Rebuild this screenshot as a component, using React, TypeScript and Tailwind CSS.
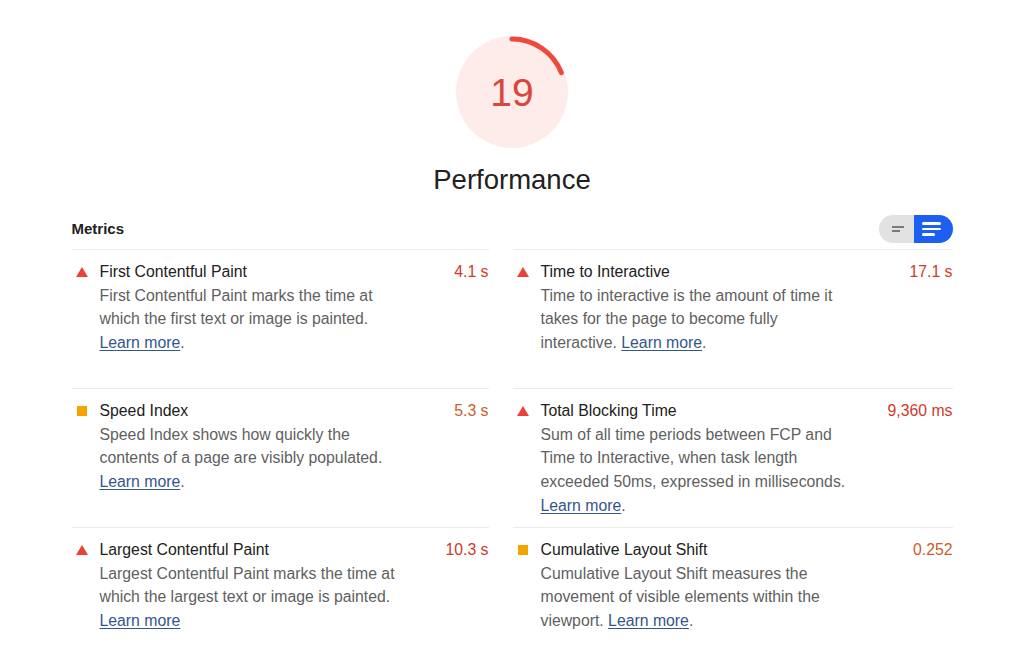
import React from 'react';

type Metric = {
  title: string;
  value: string;
  level: 'fail' | 'average';
  lines: string[];
  linkInline?: boolean;
  period?: boolean;
};

const METRICS: Metric[] = [
  {
    title: 'First Contentful Paint',
    value: '4.1 s',
    level: 'fail',
    lines: ['First Contentful Paint marks the time at', 'which the first text or image is painted.'],
    period: true,
  },
  {
    title: 'Time to Interactive',
    value: '17.1 s',
    level: 'fail',
    lines: ['Time to interactive is the amount of time it', 'takes for the page to become fully', 'interactive.'],
    linkInline: true,
    period: true,
  },
  {
    title: 'Speed Index',
    value: '5.3 s',
    level: 'average',
    lines: ['Speed Index shows how quickly the', 'contents of a page are visibly populated.'],
    period: true,
  },
  {
    title: 'Total Blocking Time',
    value: '9,360 ms',
    level: 'fail',
    lines: [
      'Sum of all time periods between FCP and',
      'Time to Interactive, when task length',
      'exceeded 50ms, expressed in milliseconds.',
    ],
    period: true,
  },
  {
    title: 'Largest Contentful Paint',
    value: '10.3 s',
    level: 'fail',
    lines: ['Largest Contentful Paint marks the time at', 'which the largest text or image is painted.'],
    period: false,
  },
  {
    title: 'Cumulative Layout Shift',
    value: '0.252',
    level: 'average',
    lines: ['Cumulative Layout Shift measures the', 'movement of visible elements within the', 'viewport.'],
    linkInline: true,
    period: true,
  },
];

function Gauge() {
  const r = 53;
  const c = 2 * Math.PI * r;
  const pct = 0.19;
  return (
    <div className="relative w-[112px] h-[112px]">
      <svg width="112" height="112" viewBox="0 0 112 112">
        <circle cx="56" cy="56" r="56" fill="#fdecea" />
        <circle
          cx="56"
          cy="56"
          r={r}
          fill="none"
          stroke="#ee4a3c"
          strokeWidth="5"
          strokeLinecap="round"
          strokeDasharray={`${c * pct} ${c}`}
          transform="rotate(-90 56 56)"
        />
      </svg>
      {/* score sits over the ring */}
      <div className="absolute inset-0 flex items-center justify-center text-[39px] leading-none text-[#d9463b] pt-[1px]">
        19
      </div>
    </div>
  );
}

function Toggle() {
  return (
    <div className="flex w-[74px] h-[28px] rounded-full overflow-hidden">
      <div className="w-[35px] bg-[#e2e2e2] flex flex-col justify-center pl-[13px] gap-[2px]">
        <div className="w-[12px] h-[2px] bg-[#7a7a7a]" />
        <div className="w-[8px] h-[2px] bg-[#7a7a7a]" />
      </div>
      <div className="flex-1 bg-[#1d5ff0] flex flex-col justify-center pl-[8px] gap-[3px]">
        <div className="w-[19px] h-[2.5px] bg-white rounded-full" />
        <div className="w-[19px] h-[2.5px] bg-white rounded-full" />
        <div className="w-[13px] h-[2.5px] bg-white rounded-full" />
      </div>
    </div>
  );
}

function Icon({ level }: { level: Metric['level'] }) {
  if (level === 'fail') {
    return (
      <svg width="12" height="10" viewBox="0 0 12 10" className="mt-[7px]">
        <polygon points="6,0 12,10 0,10" fill="#ea4335" />
      </svg>
    );
  }
  return <div className="w-[10px] h-[10px] bg-[#f5a300] mt-[7px] ml-[1px]" />;
}

function LearnMore() {
  return <span className="underline text-[#34568b] underline-offset-2">Learn more</span>;
}

function MetricCell({ m }: { m: Metric }) {
  const last = m.lines.length - 1;
  return (
    <div className="border-t border-[#ececec] pt-[10px] flex">
      <div className="w-[28px] pl-[4px] shrink-0">
        <Icon level={m.level} />
      </div>
      <div className="flex-1">
        <div className="flex justify-between">
          <span className="text-[#212121]">{m.title}</span>
          <span className={m.level === 'fail' ? 'text-[#d2392c]' : 'text-[#c8602c]'}>{m.value}</span>
        </div>
        <div className="text-[#5f5f5f]">
          {m.lines.map((l, i) => (
            <div key={i}>
              {l}
              {i === last && m.linkInline && (
                <>
                  {' '}
                  <LearnMore />
                  {m.period && '.'}
                </>
              )}
            </div>
          ))}
          {!m.linkInline && (
            <div>
              <LearnMore />
              {m.period && '.'}
            </div>
          )}
        </div>
      </div>
    </div>
  );
}

export default function App() {
  return (
    <div
      className="w-[1024px] h-[657px] bg-white overflow-hidden flex flex-col items-center"
      style={{ fontFamily: '"Liberation Sans", Arial, sans-serif' }}
    >
      <div className="mt-[36px]">
        <Gauge />
      </div>
      <div className="mt-[16px] text-[27.5px] leading-[32px] text-[#212121]">Performance</div>

      <div className="w-[881px] mt-[19px]">
        <div className="flex items-center justify-between h-[28px]">
          <span className="text-[15px] font-bold text-[#212121]">Metrics</span>
          <Toggle />
        </div>

        <div className="mt-[6px] grid grid-cols-[417px_440px] gap-x-[24px] auto-rows-[139px] text-[15.8px] leading-[23.7px]">
          {METRICS.map((m, i) => (
            <MetricCell key={i} m={m} />
          ))}
        </div>
      </div>
    </div>
  );
}
